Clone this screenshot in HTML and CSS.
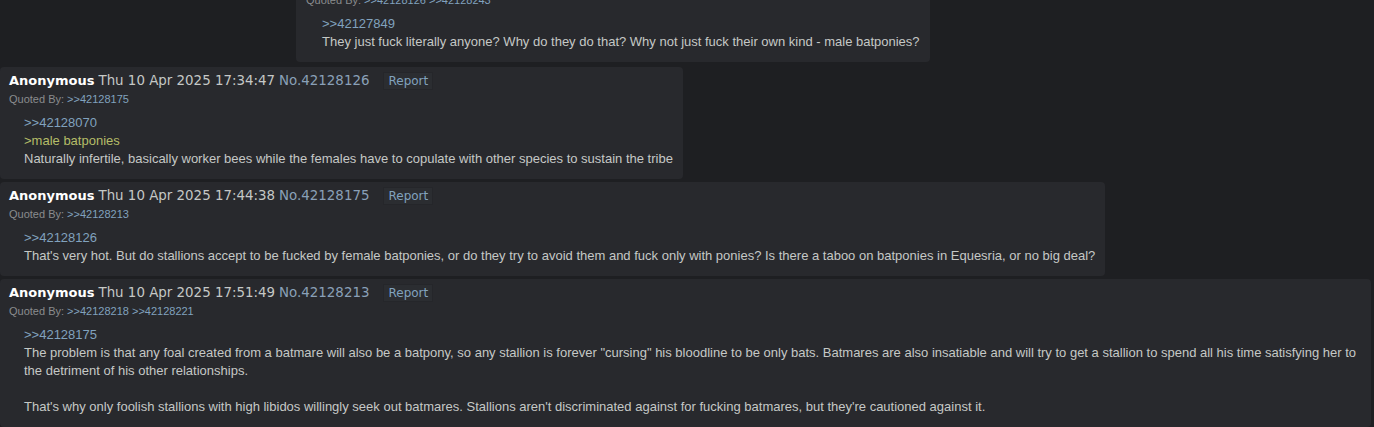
FILE: index.html
```html
<!DOCTYPE html>
<html lang="en">
<head>
  <meta charset="UTF-8">
  <title>Thread</title>
  <link rel="stylesheet" href="styles.css">
</head>
<body>
  <div class="thread">
    <div class="post post-side">
      <div class="backlinks">Quoted By: <a href="#p42128126">&gt;&gt;42128126</a> <a href="#p42128243">&gt;&gt;42128243</a></div>
      <blockquote class="message">
        <a class="quotelink" href="#p42127849">&gt;&gt;42127849</a><br>
        They just fuck literally anyone? Why do they do that? Why not just fuck their own kind - male batponies?
      </blockquote>
    </div>

    <div class="post" id="p42128126">
      <div class="post-info">
        <span class="name">Anonymous</span>
        <span class="date">Thu 10 Apr 2025 17:34:47</span>
        <a class="post-num" href="#p42128126">No.42128126</a>
        <button class="report">Report</button>
      </div>
      <div class="backlinks">Quoted By: <a href="#p42128175">&gt;&gt;42128175</a></div>
      <blockquote class="message">
        <a class="quotelink" href="#p42128070">&gt;&gt;42128070</a><br>
        <span class="greentext">&gt;male batponies</span><br>
        Naturally infertile, basically worker bees while the females have to copulate with other species to sustain the tribe
      </blockquote>
    </div>

    <div class="post" id="p42128175">
      <div class="post-info">
        <span class="name">Anonymous</span>
        <span class="date">Thu 10 Apr 2025 17:44:38</span>
        <a class="post-num" href="#p42128175">No.42128175</a>
        <button class="report">Report</button>
      </div>
      <div class="backlinks">Quoted By: <a href="#p42128213">&gt;&gt;42128213</a></div>
      <blockquote class="message">
        <a class="quotelink" href="#p42128126">&gt;&gt;42128126</a><br>
        That's very hot. But do stallions accept to be fucked by female batponies, or do they try to avoid them and fuck only with ponies? Is there a taboo on batponies in Equesria, or no big deal?
      </blockquote>
    </div>

    <div class="post" id="p42128213">
      <div class="post-info">
        <span class="name">Anonymous</span>
        <span class="date">Thu 10 Apr 2025 17:51:49</span>
        <a class="post-num" href="#p42128213">No.42128213</a>
        <button class="report">Report</button>
      </div>
      <div class="backlinks">Quoted By: <a href="#p42128218">&gt;&gt;42128218</a> <a href="#p42128221">&gt;&gt;42128221</a></div>
      <blockquote class="message">
        <a class="quotelink" href="#p42128175">&gt;&gt;42128175</a><br>
        The problem is that any foal created from a batmare will also be a batpony, so any stallion is forever "cursing" his bloodline to be only bats. Batmares are also insatiable and will try to get a stallion to spend all his time satisfying her to the detriment of his other relationships.<br>
        <br>
        That's why only foolish stallions with high libidos willingly seek out batmares. Stallions aren't discriminated against for fucking batmares, but they're cautioned against it.
      </blockquote>
    </div>
  </div>
</body>
</html>
```

FILE: styles.css
```css
body {
  margin: 0;
  background-color: #1e1f22;
  color: #c5c8c6;
  font-family: "Liberation Sans", Arial, sans-serif;
  font-size: 13px;
  overflow: hidden;
}

a {
  color: #81a2be;
  text-decoration: none;
}

.thread {
  display: flex;
  flex-direction: column;
  align-items: flex-start;
  gap: 3px;
  margin-top: -12px;
  padding-right: 3px;
}

.post {
  background-color: #28292d;
  border-radius: 4px;
  padding: 4px 10px 11px 9px;
}

.post-side {
  margin-left: 296px;
  margin-bottom: 2px;
  padding-left: 10px;
}

.post-info {
  font-family: "DejaVu Sans", Verdana, sans-serif;
  font-size: 13.4px;
  line-height: 20px;
  display: flex;
  align-items: center;
  gap: 4px;
}

.name {
  color: #ffffff;
  font-weight: bold;
  font-size: 13px;
}

.date {
  color: #c5c8c6;
}

.post-num {
  color: #8aa0b8;
}

.report {
  margin-left: 10px;
  padding: 1px 4px;
  background-color: #2b2d31;
  border: 1px solid #25262a;
  color: #81a2be;
  font-family: "DejaVu Sans", Verdana, sans-serif;
  font-size: 12px;
  line-height: 14px;
}

.backlinks {
  font-size: 11px;
  line-height: 16px;
  color: #8a8c8e;
}

.message {
  margin: 7px 0 0 15px;
  line-height: 18px;
}

.post-side .message {
  margin-left: 16px;
}

.quotelink {
  color: #81a2be;
}

.greentext {
  color: #b5bd68;
}
```
